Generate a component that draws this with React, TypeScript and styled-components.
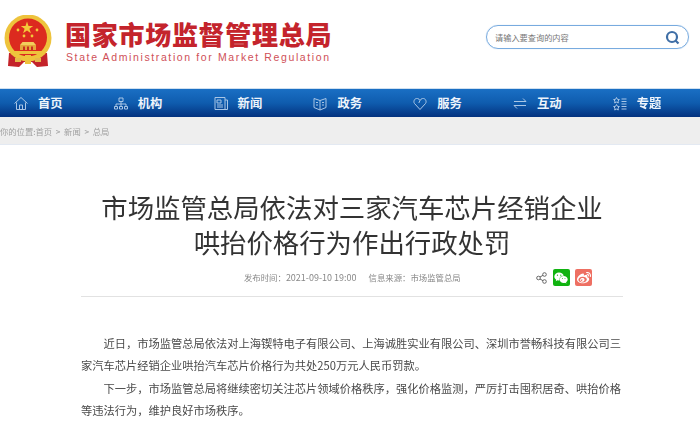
import React from 'react';
import styled, { createGlobalStyle } from 'styled-components';
import { FaWeibo, FaWeixin } from 'react-icons/fa';

const GlobalStyle = createGlobalStyle`
  html, body {
    margin: 0;
    padding: 0;
    background: #fff;
    overflow: hidden;
    font-family: "Liberation Sans", "Noto Sans CJK SC", sans-serif;
  }
`;

const Page = styled.div`
  width: 700px;
  height: 440px;
  overflow: hidden;
  filter: blur(0.45px);
`;

const Header = styled.header`
  height: 88px;
  display: flex;
  align-items: flex-start;
  padding: 15px 11px 0 4px;
  box-sizing: border-box;
  background: #fff;
`;

const Brand = styled.div`
  display: flex;
  gap: 13px;
  flex: 1;
`;

const BrandText = styled.div`
  display: flex;
  flex-direction: column;
  padding-top: 3px;
`;

const BrandName = styled.div`
  font-family: "Noto Sans CJK SC", sans-serif;
  font-weight: 900;
  font-size: 26px;
  line-height: 31px;
  letter-spacing: 0.72px;
  color: #c4242c;
  white-space: nowrap;
`;

const BrandEnglish = styled.div`
  margin: 1px 0 0 1px;
  font-size: 10.5px;
  line-height: 14px;
  letter-spacing: 1.62px;
  color: #cf5058;
  white-space: nowrap;
`;

const SearchBox = styled.div`
  width: 203px;
  height: 24px;
  margin-top: 10px;
  padding: 0 8px;
  box-sizing: border-box;
  display: flex;
  align-items: center;
  justify-content: space-between;
  border: 1px solid #78abdf;
  border-radius: 12px;
  box-shadow: 0 0 1px #a9c9ea;
`;

const SearchHint = styled.span`
  font-family: "Noto Sans CJK SC", sans-serif;
  font-size: 8.2px;
  color: #777;
`;

const Nav = styled.nav`
  height: 29px;
  display: grid;
  grid-template-columns: repeat(7, 99.8px);
  padding-left: 14px;
  box-sizing: border-box;
  border-top: 1px solid #cfe0f0;
  background: linear-gradient(#1a6fc4, #0f5cae 50%, #03327f);
`;

const NavItem = styled.a`
  display: flex;
  align-items: center;
  gap: 10px;
  color: #eef4fb;
  font-family: "Noto Sans CJK SC", sans-serif;
  font-weight: 700;
  font-size: 12.3px;
  white-space: nowrap;
`;

const NavIcon = styled.svg`
  width: 14px;
  height: 15px;
  fill: none;
  stroke: #a9c6e6;
  stroke-width: 1;
  flex: none;
`;

const Crumbs = styled.div`
  height: 28px;
  display: flex;
  align-items: center;
  gap: 3.7px;
  background: #eeeeee;
  border-bottom: 1px solid #e3e9f2;
  box-sizing: border-box;
  font-family: "Noto Sans CJK SC", sans-serif;
  font-size: 8.3px;
  color: #a0a0a0;
  white-space: nowrap;
`;

const Article = styled.main`
  padding: 44px 77px 0 81px;
`;

const Title = styled.h1`
  margin: 0;
  font-family: "Noto Sans CJK SC", sans-serif;
  font-weight: 400;
  font-size: 26.4px;
  line-height: 35px;
  color: #333;
  text-align: center;
`;

const MetaRow = styled.div`
  height: 38px;
  display: flex;
  align-items: center;
  justify-content: space-between;
  padding: 0 31px 0 163px;
  border-bottom: 1px solid #e2e2e2;
  box-sizing: border-box;
`;

const MetaText = styled.div`
  display: flex;
  align-items: baseline;
  gap: 12px;
  font-family: "Noto Sans CJK SC", sans-serif;
  font-size: 8.4px;
  color: #888;
`;

const DateValue = styled.span`
  font-size: 9px;
`;

const ShareGroup = styled.div`
  display: flex;
  align-items: center;
  gap: 5.5px;
`;

const ShareButton = styled.span<{ $bg: string }>`
  width: 17px;
  height: 17px;
  display: flex;
  align-items: center;
  justify-content: center;
  background: ${(p) => p.$bg};
  color: #fff;
  font-size: 14px;
  border-radius: 2px;
`;

const Body = styled.div`
  padding-top: 35px;
`;

const Paragraph = styled.p`
  margin: 0;
  text-indent: 22.5px;
  font-family: "Noto Sans CJK SC", sans-serif;
  font-size: 11.25px;
  line-height: 22.3px;
  color: #4a4a4a;
`;

function Emblem() {
  return (
    <svg width="48" height="53" viewBox="0 0 48 53">
      <path d="M5 38 L4 51 L15 52 L20 47 L28 47 L33 52 L44 51 L43 38 Z" fill="#c4232a" />
      <circle cx="24" cy="23" r="23.500" fill="#eec33c" />
      <circle cx="24" cy="22.500" r="19" fill="#dc2a1f" />
      <path d="M23 6.500 l1.500 4.500 h4.700 l-3.800 2.800 1.500 4.500 -3.900 -2.800 -3.900 2.800 1.500 -4.500 -3.800 -2.800 h4.700 Z" fill="#f3c93a" />
      <circle cx="14" cy="15" r="1.400" fill="#f3c93a" />
      <circle cx="33" cy="15" r="1.400" fill="#f3c93a" />
      <circle cx="20" cy="21" r="1.400" fill="#f3c93a" />
      <circle cx="28" cy="21" r="1.400" fill="#f3c93a" />
      <path d="M18.500 27 h11 l2.500 3 h-16 Z" fill="#f2cf5c" />
      <path d="M16 30 h16 v5 H16 Z" fill="#e5a63a" />
      <path d="M19 31.500 h2 v3.500 h-2 Z M23 31.500 h2 v3.500 h-2 Z M27 31.500 h2 v3.500 h-2 Z" fill="#c9301f" />
      <path d="M10 36 h28 v3 H10 Z" fill="#eec33c" />
      <path d="M21 40 h6 v9 h-6 Z" fill="#eec33c" />
      <path d="M11 43 h6 v4 h-6 Z M31 43 h6 v4 h-6 Z" fill="#e6b84a" />
    </svg>
  );
}

function SearchGlyph() {
  return (
    <svg width="15" height="15" viewBox="0 0 15 15" fill="none">
      <circle cx="7" cy="7" r="5" stroke="#3f6ea6" strokeWidth="2.200" />
      <path d="M10.500 10.500 L13.500 13.500" stroke="#3f6ea6" strokeWidth="2.200" />
    </svg>
  );
}

const navItems: { label: string; icon: React.ReactNode }[] = [
  {
    label: '首页',
    icon: <path d="M.5 7.500 7 1.500l6.500 6M2.500 6.500V13.500h9V6.500M5.500 13.500V9h3v4.500" />,
  },
  {
    label: '机构',
    icon: (
      <path d="M5 2h4v3.500H5zM7 5.500V8M2 8h10M2 8v2.500M7 8v2.500M12 8v2.500M.5 10.500h3v2.500h-3zM5.500 10.500h3v2.500h-3zM10.500 10.500h3v2.500h-3z" />
    ),
  },
  {
    label: '新闻',
    icon: <path d="M1 1.500h10v12H1zM11 4h2.500v9.500H11M3 4h4v3H3zM3 9h6M3 11h6" />,
  },
  {
    label: '政务',
    icon: <path d="M1 2.500 7 4.500l6-2v9L7 14 1 11.500zM7 4.500V14M3 6.500h2M3 9h2M9 6.500h2M9 9h2" />,
  },
  {
    label: '服务',
    icon: (
      <path d="M7 13.500 1.500 7.500C0 5.500 1.500 2 4.500 2.500 5.800 2.700 6.500 3.500 7 4.500 7.500 3.500 8.200 2.700 9.500 2.500c3-.5 4.500 3 3 5zM7 4.500 5.800 7" />
    ),
  },
  {
    label: '互动',
    icon: <path d="M1 5.500h12L10 2.500M13 9.500H1l3 3" />,
  },
  {
    label: '专题',
    icon: (
      <path d="M3.500 1.500l.9 1.800 2 .3-1.400 1.400.3 2-1.800-.9-1.800.9.3-2L.6 3.600l2-.3zM3.500 8.500l.9 1.800 2 .3-1.400 1.400.3 2-1.800-.9-1.800.9.3-2-1.400-1.400 2-.3zM8.500 3h5M8.500 5.500h5M8.500 8h5M8.500 10.500h5M8.500 13h5" />
    ),
  },
];

export default function App() {
  return (
    <Page>
      <GlobalStyle />
      <Header>
        <Brand>
          <Emblem />
          <BrandText>
            <BrandName>国家市场监督管理总局</BrandName>
            <BrandEnglish>State Administration for Market Regulation</BrandEnglish>
          </BrandText>
        </Brand>
        <SearchBox>
          <SearchHint>请输入要查询的内容</SearchHint>
          <SearchGlyph />
        </SearchBox>
      </Header>
      <Nav>
        {navItems.map((item) => (
          <NavItem key={item.label}>
            <NavIcon viewBox="0 0 14 15">{item.icon}</NavIcon>
            {item.label}
          </NavItem>
        ))}
      </Nav>
      <Crumbs>
        <span>你的位置:首页</span>
        <span>&gt;</span>
        <span>新闻</span>
        <span>&gt;</span>
        <span>总局</span>
      </Crumbs>
      <Article>
        <Title>
          市场监管总局依法对三家汽车芯片经销企业
          <br />
          哄抬价格行为作出行政处罚
        </Title>
        <MetaRow>
          <MetaText>
            <span>
              发布时间：<DateValue>2021-09-10 19:00</DateValue>
            </span>
            <span>信息来源：市场监管总局</span>
          </MetaText>
          <ShareGroup>
            <svg width="11" height="12" viewBox="0 0 11 12" fill="none" stroke="#666" strokeWidth="1">
              <circle cx="2.500" cy="6" r="1.800" />
              <circle cx="8.500" cy="2.500" r="1.800" />
              <circle cx="8.500" cy="9.500" r="1.800" />
              <path d="M4 5 7 3.300M4 7l3 1.700" />
            </svg>
            <ShareButton $bg="#10b310">
              <FaWeixin />
            </ShareButton>
            <ShareButton $bg="#ee6f62">
              <FaWeibo />
            </ShareButton>
          </ShareGroup>
        </MetaRow>
        <Body>
          <Paragraph>
            近日，市场监管总局依法对上海锲特电子有限公司、上海诚胜实业有限公司、深圳市誉畅科技有限公司三家汽车芯片经销企业哄抬汽车芯片价格行为共处250万元人民币罚款。
          </Paragraph>
          <Paragraph>
            下一步，市场监管总局将继续密切关注芯片领域价格秩序，强化价格监测，严厉打击囤积居奇、哄抬价格等违法行为，维护良好市场秩序。
          </Paragraph>
        </Body>
      </Article>
    </Page>
  );
}
